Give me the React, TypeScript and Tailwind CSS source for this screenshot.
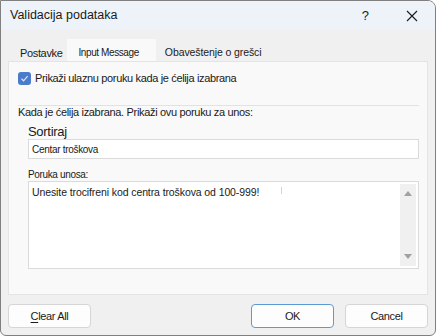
const ui = '"Liberation Sans", Arial, sans-serif'

function DialogButton({ children, primary }: { children: React.ReactNode; primary?: boolean }) {
  return (
    <button
      type="button"
      className={
        primary
          ? 'flex h-[24px] w-[83px] items-center justify-center rounded-[4px] border border-[#5b9bd5] bg-[#fdfdfd] text-[11px] tracking-[-0.35px] text-[#1a1a1a]'
          : 'flex h-[24px] w-[83px] items-center justify-center rounded-[4px] border border-[#d6d6d6] bg-[#fdfdfd] text-[11px] tracking-[-0.35px] text-[#1a1a1a]'
      }
    >
      {children}
    </button>
  )
}

export default function App() {
  return (
    <div
      className="flex h-[336px] w-[436px] flex-col overflow-hidden rounded-tr-[8px] rounded-b-[6px] border border-[#808080] bg-[#f0f0f0]"
      style={{ fontFamily: ui }}
    >
      {/* title bar */}
      <div className="flex h-[29px] shrink-0 items-center bg-[#eef3f9] pl-[9px] pr-[17px]">
        <span className="text-[12.5px] text-[#1a1a1a]">Validacija podataka</span>
        <span className="ml-auto mr-[37px] text-[13px] text-[#1a1a1a]">?</span>
        <svg width="12" height="12" viewBox="0 0 12 12" className="text-[#1a1a1a]">
          <path d="M1 1 L11 11 M11 1 L1 11" stroke="currentColor" strokeWidth="1.1" fill="none" />
        </svg>
      </div>

      <div className="flex flex-1 flex-col px-[7px]">
        {/* tabs */}
        <div className="mt-[9px] flex h-[22px] text-[#1a1a1a]">
          <div className="flex h-[22px] items-center pl-[12px] pr-[5px] pt-[7px] text-[11px] tracking-[-0.35px]">Postavke</div>
          <div className="flex h-[22px] items-center bg-[#f9f9f9] pl-[11px] pr-[17px] pt-[5px] text-[10px] tracking-[-0.4px]">
            Input Message
          </div>
          <div className="flex h-[22px] items-center pl-[9px] pt-[5px] text-[10.5px] tracking-[-0.1px]">Obaveštenje o grešci</div>
        </div>

        {/* panel */}
        <div className="flex h-[234px] flex-col border border-[#e4e4e4] bg-[#f9f9f9] pl-[9px] pr-[8px]">
          <div className="mt-[10px] flex items-center gap-[4px] leading-[13px]">
            <div className="flex h-[13px] w-[13px] items-center justify-center rounded-[3px] bg-[#4a7cc9]">
              <svg width="9" height="9" viewBox="0 0 9 9">
                <path d="M1.5 4.8 L3.6 6.8 L7.6 2.2" stroke="#dbe6f7" strokeWidth="1.2" fill="none" />
              </svg>
            </div>
            <span className="text-[11px] tracking-[-0.35px] text-[#1a1a1a]">Prikaži ulaznu poruku kada je ćelija izabrana</span>
          </div>

          <div className="mt-[20px] h-px bg-[#e2e2e2]" />
          <div className="text-[11px] leading-[13px] tracking-[-0.33px] text-[#1a1a1a]">
            Kada je ćelija izabrana. Prikaži ovu poruku za unos:
          </div>

          <div className="pl-[10px]">
            <div className="mt-[5px] text-[13px] leading-[15px] tracking-[-0.3px] text-[#1a1a1a]">Sortiraj</div>
            <div className="flex h-[20px] items-center border border-[#dadada] bg-white pl-[3px] text-[10px] tracking-[-0.3px] text-[#1a1a1a]">
              Centar troškova
            </div>

            <div className="mt-[10px] text-[10px] leading-[12px] tracking-[-0.35px] text-[#1a1a1a]">Poruka unosa:</div>
            <div className="flex h-[88px] border border-[#dadada] bg-white">
              <div className="flex flex-1 items-start pl-[3px] pt-[3px] text-[10.5px] tracking-[-0.1px] text-[#1a1a1a]">
                <span>Unesite trocifreni kod centra troškova od 100-999!</span>
                <span className="ml-[22px] mt-[2px] h-[7px] w-px bg-[#b8dcf5]" />
              </div>
              <div className="my-[2px] mr-[2px] flex w-[16px] flex-col items-center justify-between bg-[#f0f0f0] py-[7px]">
                <svg width="8" height="5" viewBox="0 0 8 5">
                  <path d="M0 5 L4 0 L8 5 Z" fill="#a0a0a0" />
                </svg>
                <svg width="8" height="5" viewBox="0 0 8 5">
                  <path d="M0 0 L4 5 L8 0 Z" fill="#a0a0a0" />
                </svg>
              </div>
            </div>
          </div>
        </div>

        {/* buttons */}
        <div className="mt-[9px] flex items-center">
          <DialogButton>
            <span>
              <span className="underline underline-offset-2">C</span>lear All
            </span>
          </DialogButton>
          <div className="ml-auto flex gap-[11px]">
            <DialogButton primary>OK</DialogButton>
            <DialogButton>Cancel</DialogButton>
          </div>
        </div>
      </div>
    </div>
  )
}
